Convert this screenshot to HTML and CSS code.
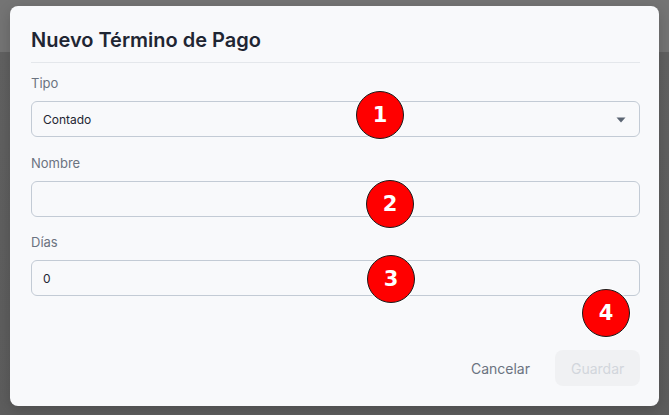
FILE: index.html
```html
<!DOCTYPE html>
<html lang="es">
<head>
<meta charset="utf-8">
<title>Nuevo Término de Pago</title>
<link rel="stylesheet" href="styles.css">
</head>
<body>
<div class="dialog">
  <h2 class="title">Nuevo Término de Pago</h2>
  <div class="fields">
    <div class="field">
      <label class="label">Tipo</label>
      <div class="control select">
        <span>Contado</span>
        <svg class="chev" width="10" height="6" viewBox="0 0 10 6"><path d="M0.5 0.5 L9.5 0.5 L5 5.5 Z" fill="#5b6573"/></svg>
      </div>
    </div>
    <div class="field">
      <label class="label">Nombre</label>
      <div class="control"></div>
    </div>
    <div class="field">
      <label class="label">Días</label>
      <div class="control"><span>0</span></div>
    </div>
  </div>
  <div class="footer">
    <button class="btn btn-cancel">Cancelar</button>
    <button class="btn btn-save">Guardar</button>
  </div>
</div>
<div class="badge b1">1</div>
<div class="badge b2">2</div>
<div class="badge b3">3</div>
<div class="badge b4">4</div>
</body>
</html>
```
FILE: styles.css
```css
* { box-sizing: border-box; }
html, body { margin: 0; height: 100%; }
body {
  background: linear-gradient(#747474 0, #747474 52px, #616161 52px, #5d5d5d 100%);
  font-family: "Inter", "Liberation Sans", sans-serif;
  padding: 6px 10px;
  position: relative;
  overflow: hidden;
}
.dialog {
  width: 649px;
  height: 400px;
  background: #f8f9fb;
  border-radius: 8px;
  box-shadow: 0 4px 14px rgba(0,0,0,0.18);
  padding: 20px 19px 20px 21px;
  display: flex;
  flex-direction: column;
}
.title {
  margin: 0;
  font-size: 20px;
  line-height: 28px;
  font-weight: 600;
  color: #1f2633;
  padding-bottom: 8px;
  border-bottom: 1px solid #e4e7eb;
}
.fields {
  display: flex;
  flex-direction: column;
  padding-top: 11px;
}
.field { display: flex; flex-direction: column; }
.field + .field { margin-top: 17px; }
.field + .field + .field { margin-top: 16px; }
.label {
  font-size: 13px;
  line-height: 18px;
  color: #6b7380;
  margin-bottom: 9px;
}
.control {
  height: 36px;
  border: 1px solid #c3cbd5;
  border-radius: 6px;
  background: #f8f9fb;
  display: flex;
  align-items: center;
  padding: 0 12px 0 11px;
  font-size: 12px;
  color: #1f2633;
}
.select { justify-content: space-between; }
.chev { margin-right: 1px; margin-top: 1px; }
.footer {
  margin-top: auto;
  display: flex;
  justify-content: flex-end;
  gap: 9px;
}
.btn {
  height: 36px;
  border: none;
  border-radius: 8px;
  font-family: "Inter", "Liberation Sans", sans-serif;
  font-size: 14px;
  padding: 0 16px;
  background: transparent;
}
.btn-cancel { color: #6b7380; }
.btn-save { background: #f0f1f3; color: #d2d6dc; width: 85px; }
.badge {
  position: absolute;
  width: 48px;
  height: 48px;
  border-radius: 50%;
  background: #ff0000;
  border: 1.5px solid #1a1a1a;
  box-shadow: 0 0 0 1px rgba(255,255,255,0.6);
  color: #fff;
  font-family: "DejaVu Sans", sans-serif;
  font-weight: bold;
  font-size: 21px;
  display: flex;
  align-items: center;
  justify-content: center;
}
.b1 { left: 356px; top: 91px; }
.b2 { left: 366px; top: 180px; }
.b3 { left: 367px; top: 255px; }
.b4 { left: 582px; top: 289px; }
```
